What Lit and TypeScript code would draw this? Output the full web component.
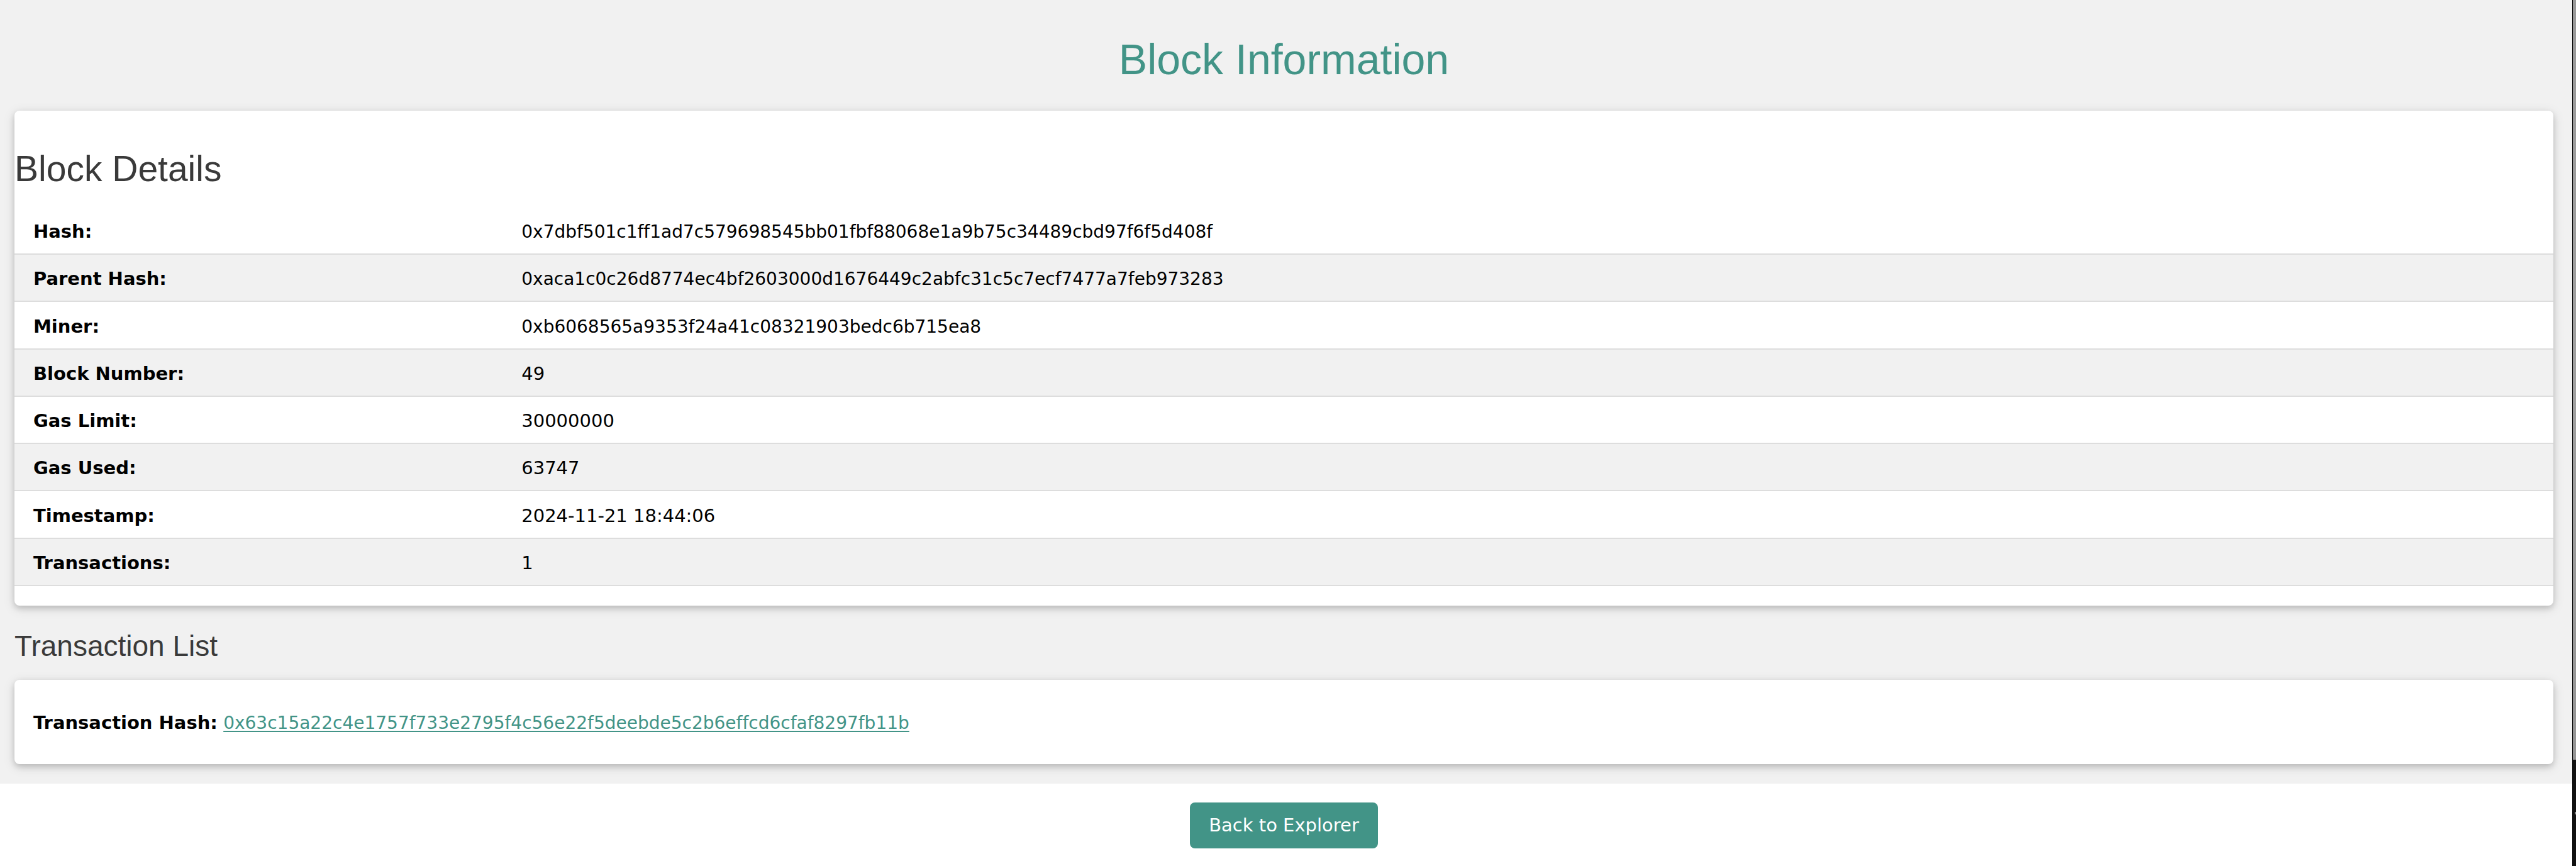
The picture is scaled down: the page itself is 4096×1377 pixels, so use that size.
import { LitElement, html, css } from "lit";
import { customElement, property } from "lit/decorators.js";
import { classMap } from "lit/directives/class-map.js";

interface DetailRow {
  label: string;
  value: string;
}

const BLOCK: DetailRow[] = [
  { label: "Hash:", value: "0x7dbf501c1ff1ad7c579698545bb01fbf88068e1a9b75c34489cbd97f6f5d408f" },
  { label: "Parent Hash:", value: "0xaca1c0c26d8774ec4bf2603000d1676449c2abfc31c5c7ecf7477a7feb973283" },
  { label: "Miner:", value: "0xb6068565a9353f24a41c08321903bedc6b715ea8" },
  { label: "Block Number:", value: "49" },
  { label: "Gas Limit:", value: "30000000" },
  { label: "Gas Used:", value: "63747" },
  { label: "Timestamp:", value: "2024-11-21 18:44:06" },
  { label: "Transactions:", value: "1" },
];

const TRANSACTIONS = ["0x63c15a22c4e1757f733e2795f4c56e22f5deebde5c2b6effcd6cfaf8297fb11b"];

@customElement("block-details")
export class BlockDetails extends LitElement {
  @property({ attribute: false }) rows: DetailRow[] = [];

  static styles = css`
    :host {
      display: block;
    }
    .table {
      width: 100%;
      height: 602px;
      border-collapse: collapse;
    }
    .row {
      border-bottom: 2px solid #ddd;
    }
    .row:nth-child(even) {
      background: #f1f1f1;
    }
    .label,
    .value {
      padding: 17px 15px 13px;
      text-align: left;
      font-weight: normal;
    }
    .label {
      width: 19.6%;
      box-sizing: border-box;
      padding-left: 30px;
      font-weight: bold;
    }
    .hash {
      font-size: 28px;
    }
  `;

  render() {
    return html`
      <table class="table">
        <tbody>
          ${this.rows.map(
            (r) => html`<tr class="row">
              <th class="label" scope="row">${r.label}</th>
              <td class=${classMap({ value: true, hash: r.value.startsWith("0x") })}>${r.value}</td>
            </tr>`
          )}
        </tbody>
      </table>
    `;
  }
}

@customElement("app-root")
export class AppRoot extends LitElement {
  static styles = css`
    :host {
      display: flex;
      min-height: 100vh;
      background: #fff;
      color: #000;
      font-family: Verdana, "DejaVu Sans", sans-serif;
      font-size: 29px;
      line-height: 43px;
      font-variant-ligatures: none;
    }
    .page {
      flex: 1;
      min-width: 0;
    }
    .content {
      padding: 43px 30px 31px 23px;
      background: #f1f1f1;
    }
    h1,
    h2,
    h3 {
      margin: 0;
      color: #3a3a3a;
      font-family: Arial, "Liberation Sans", sans-serif;
      font-weight: 400;
    }
    .title {
      margin-bottom: 30px;
      color: #429487;
      font-size: 68px;
      line-height: 103px;
      text-align: center;
    }
    .card {
      background: #fff;
      border-radius: 8px;
      box-shadow: 0 4px 10px rgba(0, 0, 0, 0.16), 0 4px 19px rgba(0, 0, 0, 0.12);
    }
    .details {
      padding: 49px 0 31px;
    }
    .details-title {
      margin-bottom: 19px;
      font-size: 57px;
      line-height: 86px;
    }
    .list-title {
      margin: 30px 0 19px;
      font-size: 46px;
      line-height: 69px;
    }
    .transaction {
      padding: 47px 30px 44px;
    }
    .transaction p {
      margin: 0;
    }
    .hash {
      color: #429487;
      font-size: 28px;
      text-decoration-thickness: 2px;
      text-underline-offset: 3px;
    }
    .footer {
      display: flex;
      justify-content: center;
      padding: 30px 30px 27px 23px;
    }
    .back {
      padding: 15px 30px;
      border: 0;
      border-radius: 8px;
      background: #429487;
      color: #fff;
      font: inherit;
      cursor: pointer;
    }
    .edge {
      display: flex;
      flex-direction: column;
      width: 5px;
      border-left: 1px solid #000;
    }
    .edge-light {
      flex: 1208;
      background: linear-gradient(#999, #a0a0a0 50%, #949494);
    }
    .edge-dark {
      flex: 169;
      display: flex;
      flex-direction: column;
      align-items: flex-end;
      justify-content: center;
      background: #111;
    }
    .speck {
      width: 2px;
      height: 4px;
      background: #888;
    }
  `;

  render() {
    return html`
      <div class="page">
        <main class="content">
          <h1 class="title">Block Information</h1>
          <section class="card details">
            <h2 class="details-title">Block Details</h2>
            <block-details .rows=${BLOCK}></block-details>
          </section>
          <h3 class="list-title">Transaction List</h3>
          ${TRANSACTIONS.map(
            (hash) => html`<section class="card transaction">
              <p><b>Transaction Hash:</b> <a class="hash" href="#${hash}">${hash}</a></p>
            </section>`
          )}
        </main>
        <footer class="footer">
          <button class="back" type="button">Back to Explorer</button>
        </footer>
      </div>
      <div class="edge" aria-hidden="true">
        <div class="edge-light"></div>
        <div class="edge-dark"><span class="speck"></span></div>
      </div>
    `;
  }
}
